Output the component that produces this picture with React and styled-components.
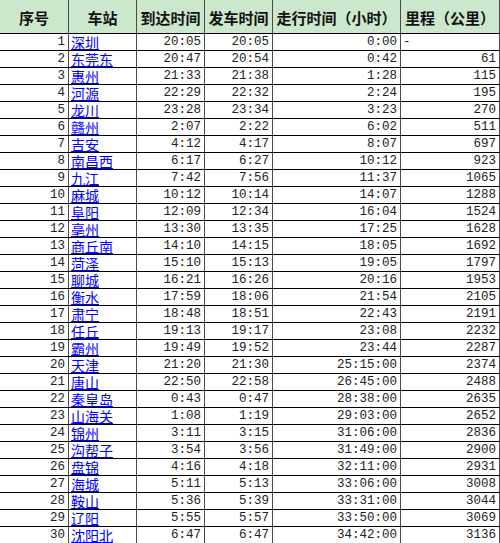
import styled, { createGlobalStyle } from 'styled-components';

const GlobalStyle = createGlobalStyle`
  html, body {
    margin: 0;
    padding: 0;
    background: #ffffff;
  }
  body {
    font-family: "Noto Sans CJK SC", "Liberation Sans", sans-serif;
  }
`;

const rows = [
  [1, '深圳', '20:05', '20:05', '0:00', '-'],
  [2, '东莞东', '20:47', '20:54', '0:42', '61'],
  [3, '惠州', '21:33', '21:38', '1:28', '115'],
  [4, '河源', '22:29', '22:32', '2:24', '195'],
  [5, '龙川', '23:28', '23:34', '3:23', '270'],
  [6, '赣州', '2:07', '2:22', '6:02', '511'],
  [7, '吉安', '4:12', '4:17', '8:07', '697'],
  [8, '南昌西', '6:17', '6:27', '10:12', '923'],
  [9, '九江', '7:42', '7:56', '11:37', '1065'],
  [10, '麻城', '10:12', '10:14', '14:07', '1288'],
  [11, '阜阳', '12:09', '12:34', '16:04', '1524'],
  [12, '亳州', '13:30', '13:35', '17:25', '1628'],
  [13, '商丘南', '14:10', '14:15', '18:05', '1692'],
  [14, '菏泽', '15:10', '15:13', '19:05', '1797'],
  [15, '聊城', '16:21', '16:26', '20:16', '1953'],
  [16, '衡水', '17:59', '18:06', '21:54', '2105'],
  [17, '肃宁', '18:48', '18:51', '22:43', '2191'],
  [18, '任丘', '19:13', '19:17', '23:08', '2232'],
  [19, '霸州', '19:49', '19:52', '23:44', '2287'],
  [20, '天津', '21:20', '21:30', '25:15:00', '2374'],
  [21, '唐山', '22:50', '22:58', '26:45:00', '2488'],
  [22, '秦皇岛', '0:43', '0:47', '28:38:00', '2635'],
  [23, '山海关', '1:08', '1:19', '29:03:00', '2652'],
  [24, '锦州', '3:11', '3:15', '31:06:00', '2836'],
  [25, '沟帮子', '3:54', '3:56', '31:49:00', '2900'],
  [26, '盘锦', '4:16', '4:18', '32:11:00', '2931'],
  [27, '海城', '5:11', '5:13', '33:06:00', '3008'],
  [28, '鞍山', '5:36', '5:39', '33:31:00', '3044'],
  [29, '辽阳', '5:55', '5:57', '33:50:00', '3069'],
  [30, '沈阳北', '6:47', '6:47', '34:42:00', '3136'],
];

const headers = ['序号', '车站', '到达时间', '发车时间', '走行时间（小时）', '里程（公里）'];

export default function App() {
  return (
    <>
      <GlobalStyle />
      <Sheet>
        <HeaderRow>
          {headers.map(h => (
            <HeadCell key={h}>{h}</HeadCell>
          ))}
        </HeaderRow>
        {rows.map(([no, station, arrive, depart, travel, km]) => (
          <Row key={no}>
            <NumCell>{no}</NumCell>
            <StationCell>
              <StationLink href="#">{station}</StationLink>
            </StationCell>
            <NumCell>{arrive}</NumCell>
            <NumCell>{depart}</NumCell>
            <NumCell>{travel}</NumCell>
            <NumCell $left={km === '-'}>{km}</NumCell>
          </Row>
        ))}
      </Sheet>
    </>
  );
}

const cols = '69px 68px 68px 68px 128px 99px';

const Sheet = styled.div`
  width: 500px;
  display: flex;
  flex-direction: column;
`;

const HeaderRow = styled.div`
  display: grid;
  grid-template-columns: ${cols};
  height: 33px;
  background: #cce8cc;
`;

const HeadCell = styled.div`
  box-sizing: border-box;
  border-right: 1px solid #4a4a4a;
  display: flex;
  align-items: center;
  justify-content: center;
  padding-top: 2px;
  font-family: "Noto Sans CJK SC", sans-serif;
  font-weight: 700;
  font-size: 15px;
  color: #111;
  white-space: nowrap;
  overflow: hidden;
`;

const Row = styled.div`
  display: grid;
  grid-template-columns: ${cols};
  height: 17px;
  box-sizing: border-box;
  border-top: 1px solid #000;
`;

const Cell = styled.div`
  box-sizing: border-box;
  border-right: 1px solid #4a4a4a;
  display: flex;
  align-items: flex-end;
  white-space: nowrap;
  overflow: hidden;
`;

const NumCell = styled(Cell)`
  justify-content: ${p => (p.$left ? 'flex-start' : 'flex-end')};
  padding: 0 ${p => (p.$left ? '0' : '3px')} 1px ${p => (p.$left ? '2px' : '0')};
  font-family: "Liberation Mono", "DejaVu Sans Mono", monospace;
  font-size: 12.5px;
  line-height: 14px;
  color: #222;
`;

const StationCell = styled(Cell)`
  padding-left: 2px;
  align-items: center;
  font-family: "Noto Sans CJK SC", sans-serif;
  font-size: 14px;
  line-height: 16px;
`;

const StationLink = styled.a`
  display: block;
  height: 16px;
  line-height: 16px;
  color: #0000ff;
  text-decoration: underline;
  text-underline-offset: 1px;
`;
